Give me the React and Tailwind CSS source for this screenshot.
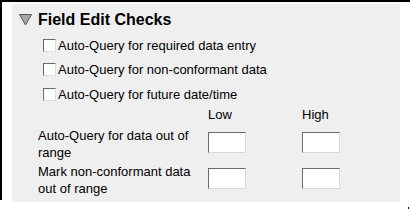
import React from "react";

function Check({ label }) {
  return (
    <div className="flex items-center h-[24.5px]">
      <span className="w-[13px] h-[13px] bg-white border border-t-[#6b6b6b] border-l-[#6b6b6b] border-b-[#dcdcdc] border-r-[#dcdcdc] mr-[2px]" />
      <span>{label}</span>
    </div>
  );
}

function Box() {
  return (
    <span className="block w-[38px] h-[21px] bg-white border border-t-[#6b6b6b] border-l-[#6b6b6b] border-b-[#d8d8d8] border-r-[#d8d8d8]" />
  );
}

export default function App() {
  return (
    <div
      className="w-[410px] h-[211px] bg-white relative text-[13px] text-black"
      style={{ fontFamily: '"Liberation Sans", Arial, sans-serif' }}
    >
      <div className="h-[2px] bg-black" />
      <div className="flex">
        <div className="w-[2px] h-[198px] bg-black" />
        <div className="ml-[10px] mt-[2px] w-[388px] h-[198px] bg-[#efefef]">
          <div className="flex items-center pl-[7px] pt-[4px] h-[27px]">
            <svg width="13" height="13" viewBox="0 0 13 13" className="mr-[6px]">
              <path d="M0.5 1.5 L12.5 1.5 L6.5 12 Z" fill="#a8a8a8" stroke="#555" strokeWidth="1" />
            </svg>
            <span className="font-bold text-[16px]">Field Edit Checks</span>
          </div>
          <div className="pl-[31px] pt-[2px]">
            <Check label="Auto-Query for required data entry" />
            <Check label="Auto-Query for non-conformant data" />
            <Check label="Auto-Query for future date/time" />
          </div>
          <div className="grid grid-cols-[170px_94px_auto] pl-[26px] -mt-[2px]">
            <div />
            <div className="h-[20px] leading-[20px]">Low</div>
            <div className="h-[20px] leading-[20px]">High</div>
            <div className="leading-[17px] pt-[2px]">Auto-Query for data out of<br />range</div>
            <div className="pt-[7px]"><Box /></div>
            <div className="pt-[7px]"><Box /></div>
            <div className="leading-[17px] pt-[2px]">Mark non-conformant data<br />out of range</div>
            <div className="pt-[7px]"><Box /></div>
            <div className="pt-[7px]"><Box /></div>
          </div>
        </div>
      </div>
      <span className="absolute right-[1px] bottom-[2px] w-[1px] h-[2px] bg-black" />
    </div>
  );
}
